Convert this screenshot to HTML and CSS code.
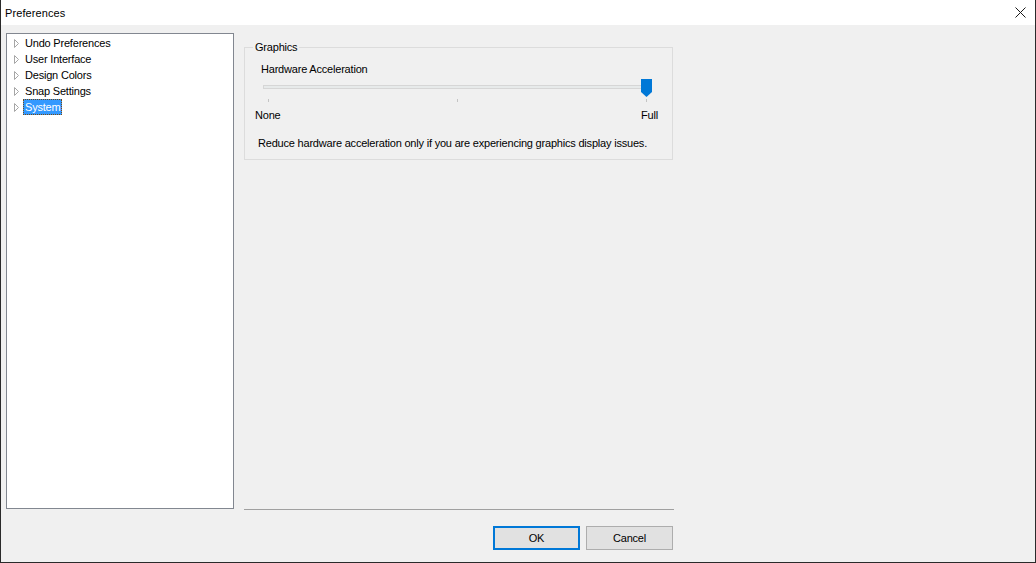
FILE: index.html
```html
<!DOCTYPE html>
<html>
<head>
<meta charset="utf-8">
<title>Preferences</title>
<link rel="stylesheet" href="styles.css">
</head>
<body>
<div class="window">
  <div class="titlebar">
    <span class="title">Preferences</span>
    <svg class="close" width="12" height="12" viewBox="0 0 12 12"><path d="M0.5 0.5 L10.5 10.5 M10.5 0.5 L0.5 10.5" stroke="#1a1a1a" stroke-width="1" fill="none"/></svg>
  </div>
  <div class="main">
    <div class="tree">
      <div class="item"><svg class="arrow" width="6" height="9" viewBox="0 0 6 9"><path d="M0.5 0.5 L4.5 4.5 L0.5 8.5 Z" fill="none" stroke="#a6a6a6"/></svg><span class="label">Undo Preferences</span></div>
      <div class="item"><svg class="arrow" width="6" height="9" viewBox="0 0 6 9"><path d="M0.5 0.5 L4.5 4.5 L0.5 8.5 Z" fill="none" stroke="#a6a6a6"/></svg><span class="label">User Interface</span></div>
      <div class="item"><svg class="arrow" width="6" height="9" viewBox="0 0 6 9"><path d="M0.5 0.5 L4.5 4.5 L0.5 8.5 Z" fill="none" stroke="#a6a6a6"/></svg><span class="label">Design Colors</span></div>
      <div class="item"><svg class="arrow" width="6" height="9" viewBox="0 0 6 9"><path d="M0.5 0.5 L4.5 4.5 L0.5 8.5 Z" fill="none" stroke="#a6a6a6"/></svg><span class="label">Snap Settings</span></div>
      <div class="item"><svg class="arrow" width="6" height="9" viewBox="0 0 6 9"><path d="M0.5 0.5 L4.5 4.5 L0.5 8.5 Z" fill="none" stroke="#a6a6a6"/></svg><span class="label selected">System</span></div>
    </div>
    <div class="right">
      <div class="group">
        <span class="legend">Graphics</span>
        <div class="hw-label">Hardware Acceleration</div>
        <div class="slider">
          <div class="track"></div>
          <div class="tick t1"></div>
          <div class="tick t2"></div>
          <div class="tick t3"></div>
          <svg class="thumb" width="11" height="18" viewBox="0 0 11 18"><path d="M0 0 H11 V13 L5.5 18 L0 13 Z" fill="#0078d7"/></svg>
        </div>
        <div class="ends"><span>None</span><span>Full</span></div>
        <div class="desc">Reduce hardware acceleration only if you are experiencing graphics display issues.</div>
      </div>
      <div class="spacer"></div>
      <div class="sep"></div>
      <div class="buttons">
        <div class="btn default">OK</div>
        <div class="btn">Cancel</div>
      </div>
    </div>
  </div>
</div>
</body>
</html>
```
FILE: styles.css
```css
html, body {
  margin: 0;
  padding: 0;
  background: #f0f0f0;
}
body {
  font-family: "Liberation Sans", Arial, sans-serif;
  font-size: 11px;
  letter-spacing: -0.2px;
  color: #000;
}
.window {
  width: 1036px;
  height: 563px;
  box-sizing: border-box;
  border-left: 1px solid #2a2a2a;
  border-right: 1px solid #2a2a2a;
  border-bottom: 1px solid #2a2a2a;
  background: #f0f0f0;
  display: flex;
  flex-direction: column;
}
.titlebar {
  height: 25px;
  flex: none;
  background: #fff;
  display: flex;
  align-items: center;
  justify-content: space-between;
  padding: 0 8px 0 4px;
}
.title {
  font-size: 11px;
  letter-spacing: 0.1px;
  line-height: 13px;
  margin-top: 1px;
}
.close {
  display: block;
  margin-top: 1px;
}
.main {
  flex: 1;
  display: flex;
  padding: 8px 0 12px 5px;
  min-height: 0;
}
.tree {
  width: 228px;
  height: 476px;
  box-sizing: border-box;
  border: 1px solid #828790;
  background: #fff;
  padding-top: 1px;
  flex: none;
}
.item {
  height: 16px;
  display: flex;
  align-items: center;
  padding-left: 7px;
}
.arrow {
  display: block;
  margin-right: 3px;
}
.label {
  line-height: 14px;
  padding: 0 1px;
  border: 1px dotted transparent;
}
.label.selected {
  background: #3399ff;
  color: #fff;
  border-color: #7a4a10;
}
.right {
  margin-left: 10px;
  width: 430px;
  display: flex;
  flex-direction: column;
}
.group {
  position: relative;
  margin-top: 14px;
  width: 429px;
  height: 113px;
  box-sizing: border-box;
  border: 1px solid #dcdcdc;
}
.legend {
  position: absolute;
  left: 8px;
  top: -8px;
  padding: 0 2px;
  background: #f0f0f0;
  line-height: 14px;
}
.hw-label {
  margin: 15px 0 0 16px;
  line-height: 13px;
}
.slider {
  position: relative;
  margin: 3px 0 0 18px;
  width: 389px;
  height: 24px;
}
.track {
  position: absolute;
  left: 0;
  right: 0;
  top: 6px;
  height: 2px;
  background: #e7eaea;
  border: 1px solid #d6d6d6;
}
.tick {
  position: absolute;
  top: 20px;
  width: 1px;
  height: 3px;
  background: #c4c4c4;
}
.t1 { left: 5px; }
.t2 { left: 194px; }
.t3 { left: 383px; }
.thumb {
  position: absolute;
  left: 378px;
  top: 0;
  display: block;
}
.ends {
  display: flex;
  justify-content: space-between;
  padding: 6px 14px 0 10px;
  line-height: 13px;
}
.desc {
  margin: 15px 0 0 13px;
  line-height: 13px;
}
.spacer {
  flex: 1;
}
.sep {
  height: 1px;
  background: #a0a0a0;
}
.buttons {
  display: flex;
  justify-content: flex-end;
  gap: 6px;
  margin-top: 16px;
  padding-right: 1px;
}
.btn {
  width: 87px;
  height: 24px;
  box-sizing: border-box;
  border: 1px solid #adadad;
  background: #e1e1e1;
  display: flex;
  align-items: center;
  justify-content: center;
  line-height: 13px;
}
.btn.default {
  border: 2px solid #0078d7;
}
```
